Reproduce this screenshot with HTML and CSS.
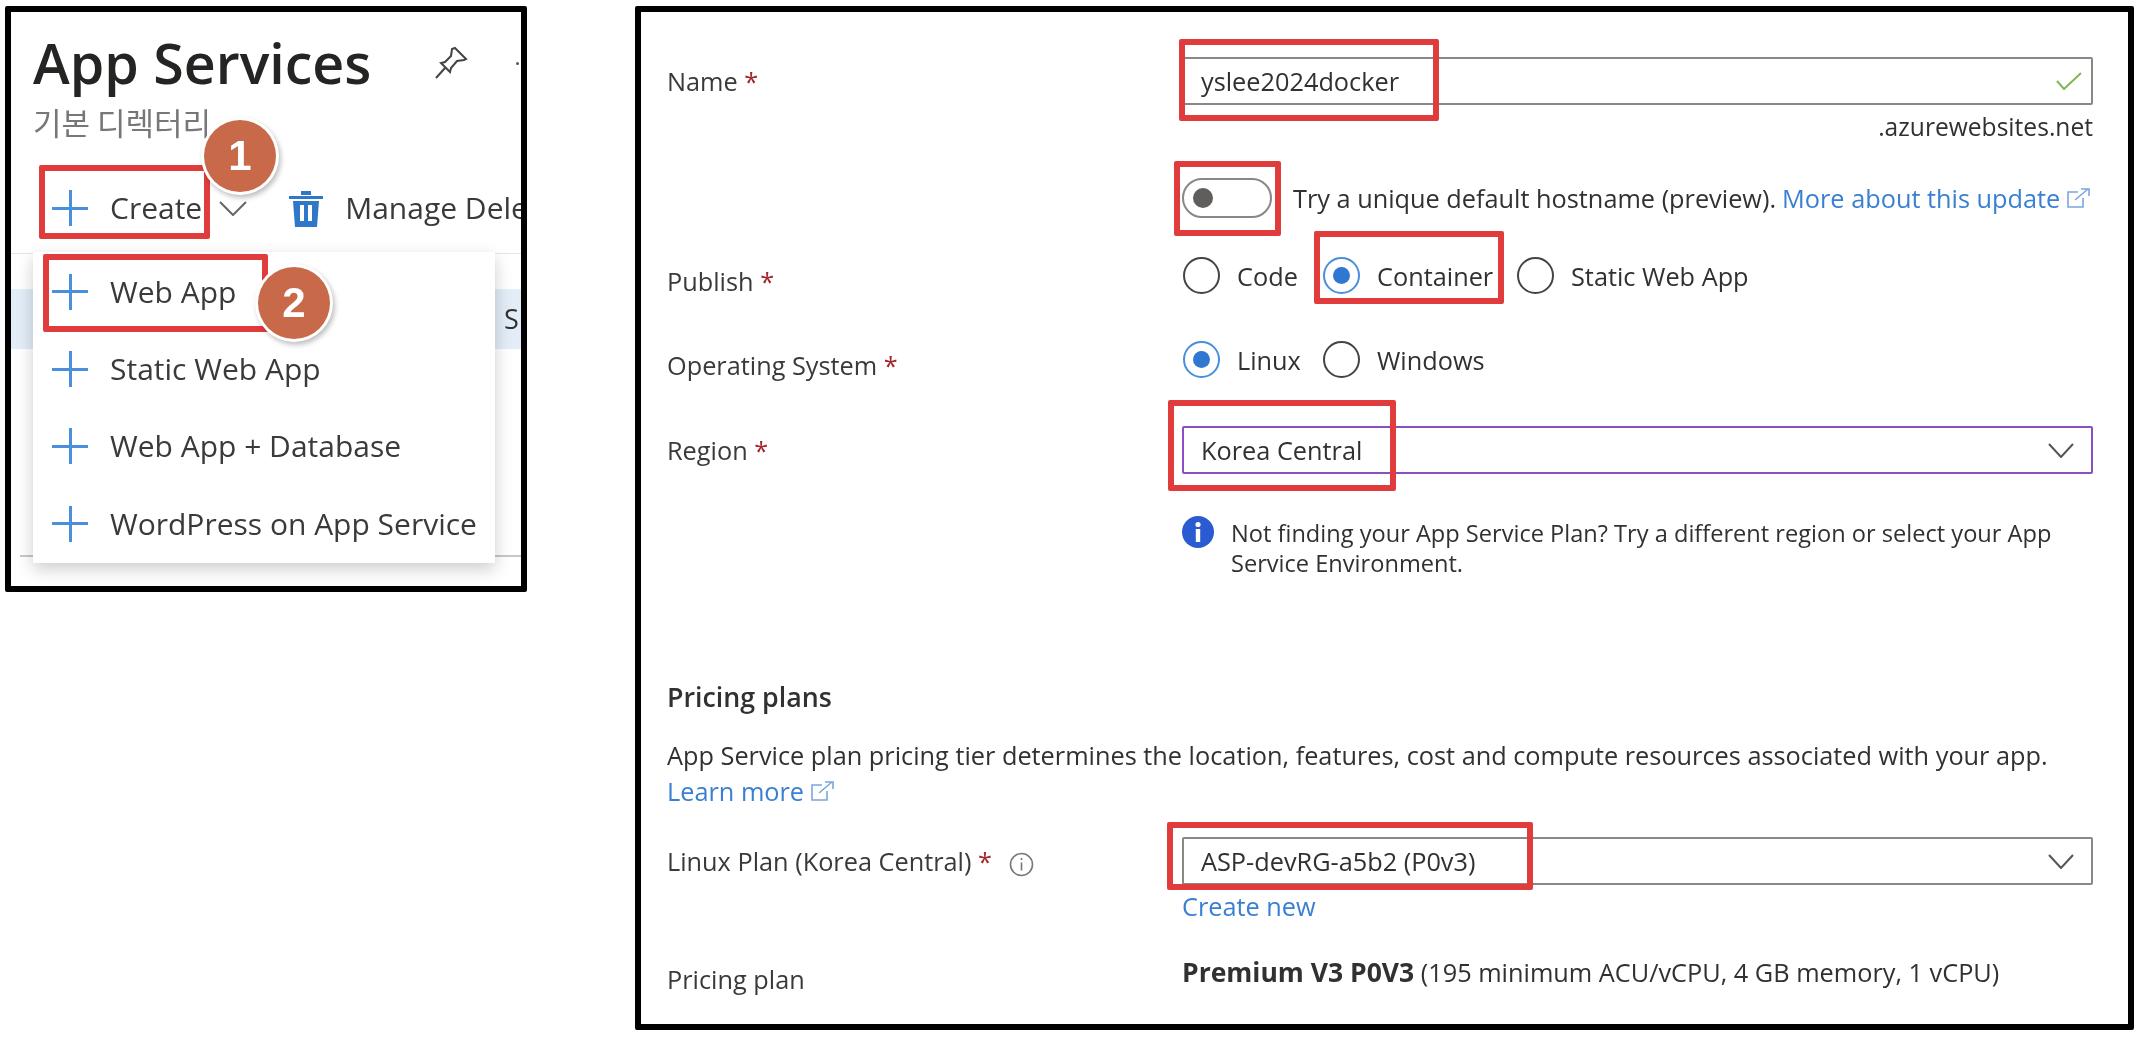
FILE: index.html
```html
<!DOCTYPE html>
<html lang="en">
<head>
    <meta charset="UTF-8">
    <meta name="viewport" content="width=device-width, initial-scale=1.0">
    <title>App Services</title>
    <link rel="stylesheet" href="styles.css">
</head>
<body>
    <div class="panel panel-left">
        <div class="title-row">
            <h1 class="title">App Services</h1>
            <svg class="pin" viewBox="0 0 34 34" fill="none" stroke="#444" stroke-width="2">
                <path d="M21 2l11 11-2 1-7 1-6 7-1 4-9-9 4-1 6-6 1-7z"/>
                <path d="M11 22L2 32"/>
            </svg>
            <span class="more-dot"></span>
        </div>
        <p class="subtitle">기본 디렉터리</p>
        <div class="toolbar">
            <span class="plus"></span>
            <span class="tool-text create-text">Create</span>
            <svg class="tool-chevron" viewBox="0 0 28 15" fill="none" stroke="#666" stroke-width="2"><path d="M1 1l13 13L27 1"/></svg>
            <svg class="trash" viewBox="0 0 34 37">
                <path fill="#2f77c8" d="M0 6h34v3H0zM12 1h10v4H12zM4 11h26l-2 26H6z"/>
                <path fill="#fff" d="M11 15h4v16h-4zM19 15h4v16h-4z"/>
            </svg>
            <span class="tool-text manage-text">Manage Delete</span>
        </div>
        <div class="behind">
            <div class="behind-row">S</div>
        </div>

        <div class="menu">
            <div class="menu-item"><span class="plus"></span><span class="tool-text">Web App</span></div>
            <div class="menu-item"><span class="plus"></span><span class="tool-text">Static Web App</span></div>
            <div class="menu-item"><span class="plus"></span><span class="tool-text">Web App + Database</span></div>
            <div class="menu-item"><span class="plus"></span><span class="tool-text">WordPress on App Service</span></div>
        </div>

        <div class="red-box box-create"></div>
        <div class="red-box box-webapp"></div>
        <div class="badge badge-one">1</div>
        <div class="badge badge-two">2</div>
    </div>

    <div class="panel panel-right">
        <div class="row row-name">
            <div class="label">Name <span class="star">*</span></div>
            <div class="field">
                <div class="input">
                    <span>yslee2024docker</span>
                    <svg class="check" viewBox="0 0 26 18" fill="none" stroke="#7fb84e" stroke-width="2"><path d="M1 9l7 8L25 1"/></svg>
                </div>
                <div class="suffix">.azurewebsites.net</div>
            </div>
        </div>
        <div class="row row-toggle">
            <div class="label"></div>
            <div class="field toggle-line">
                <span class="toggle"><span class="knob"></span></span>
                <span class="toggle-text">Try a unique default hostname (preview).</span>
                <a class="link link-update">More about this update</a>
                <svg class="ext" viewBox="0 0 23 20" fill="none" stroke="#7aa7dc" stroke-width="1.6"><path d="M11 4H1v15h15V10"/><path d="M8 12L21 1M14 1h8v7"/></svg>
            </div>
        </div>
        <div class="row row-publish">
            <div class="label label-low">Publish <span class="star">*</span></div>
            <div class="field radios">
                <span class="radio"></span><span class="radio-text text-code">Code</span>
                <span class="radio checked"></span><span class="radio-text text-container">Container</span>
                <span class="radio"></span><span class="radio-text">Static Web App</span>
            </div>
        </div>
        <div class="row row-os">
            <div class="label label-low">Operating System <span class="star">*</span></div>
            <div class="field radios">
                <span class="radio checked"></span><span class="radio-text text-code">Linux</span>
                <span class="radio"></span><span class="radio-text">Windows</span>
            </div>
        </div>
        <div class="row row-region">
            <div class="label">Region <span class="star">*</span></div>
            <div class="field">
                <div class="input select-purple">
                    <span>Korea Central</span>
                    <svg class="chevron" viewBox="0 0 26 15" fill="none" stroke="#555" stroke-width="2"><path d="M1 1l12 13L25 1"/></svg>
                </div>
            </div>
        </div>
        <div class="row row-note">
            <div class="label"></div>
            <div class="field note">
                <svg class="info" viewBox="0 0 32 32">
                    <circle cx="16" cy="16" r="16" fill="#2a5bd0"/>
                    <circle cx="16" cy="8.5" r="2.6" fill="#fff"/>
                    <rect x="13.8" y="13" width="4.4" height="13" fill="#fff"/>
                </svg>
                <p class="note-text">Not finding your App Service Plan? Try a different region or select your App<br>Service Environment.</p>
            </div>
        </div>

        <h2 class="section">Pricing plans</h2>
        <p class="desc">App Service plan pricing tier determines the location, features, cost and compute resources associated with your app.</p>
        <div class="learn">
            <a class="link">Learn more</a>
            <svg class="ext" viewBox="0 0 23 20" fill="none" stroke="#7aa7dc" stroke-width="1.6"><path d="M11 4H1v15h15V10"/><path d="M8 12L21 1M14 1h8v7"/></svg>
        </div>

        <div class="row row-plan">
            <div class="label">Linux Plan (Korea Central) <span class="star">*</span>
                <svg class="info-small" viewBox="0 0 25 25" fill="none" stroke="#777" stroke-width="1.6">
                    <circle cx="12.500" cy="12.500" r="11"/>
                    <path d="M12.500 10.500v8M12.500 6v2"/>
                </svg>
            </div>
            <div class="field">
                <div class="input">
                    <span>ASP-devRG-a5b2 (P0v3)</span>
                    <svg class="chevron" viewBox="0 0 26 15" fill="none" stroke="#555" stroke-width="2"><path d="M1 1l12 13L25 1"/></svg>
                </div>
                <a class="link create-new">Create new</a>
            </div>
        </div>
        <div class="row row-pricing">
            <div class="label label-low">Pricing plan</div>
            <div class="field"><b class="plan-name">Premium V3 P0V3</b> (195 minimum ACU/vCPU, 4 GB memory, 1 vCPU)</div>
        </div>

        <div class="red-box box-name"></div>
        <div class="red-box box-toggle"></div>
        <div class="red-box box-container"></div>
        <div class="red-box box-region"></div>
        <div class="red-box box-plan"></div>
    </div>
</body>
</html>
```
FILE: styles.css
```css
* {
    box-sizing: border-box;
}
body {
    margin: 0;
    padding: 6px 0 0 5px;
    display: flex;
    align-items: flex-start;
    gap: 108px;
    background-color: #fff;
    color: #323130;
    font-family: "Open Sans", "Noto Sans", sans-serif;
}
p, h1, h2 {
    margin: 0;
}
.panel {
    position: relative;
    background-color: #fff;
    border: 6px solid #000;
    border-radius: 2px;
    overflow: hidden;
    filter: blur(0.4px);
}

/* left panel */
.panel-left {
    width: 522px;
    height: 586px;
    padding: 21px 0 0 22px;
}
.title-row {
    display: flex;
    align-items: center;
    height: 60px;
}
.title {
    font-size: 55.500px;
    font-weight: 600;
    line-height: 60px;
    width: 401px;
    flex: none;
    color: #252423;
    white-space: nowrap;
}
.pin {
    width: 34px;
    height: 34px;
    flex: none;
}
.more-dot {
    width: 3px;
    height: 3px;
    margin-left: 48px;
    flex: none;
    border-radius: 50%;
    background-color: #555;
}
.subtitle {
    font-family: "Noto Sans CJK KR", sans-serif;
    font-size: 31px;
    line-height: 36px;
    margin-top: 11px;
    color: #777;
}
.toolbar {
    display: flex;
    align-items: center;
    height: 44px;
    margin-top: 46px;
    padding-left: 19px;
}
.plus {
    display: block;
    width: 36px;
    height: 36px;
    flex: none;
    background:
        linear-gradient(#4a8fdc, #4a8fdc) center / 3px 100% no-repeat,
        linear-gradient(#4a8fdc, #4a8fdc) center / 100% 3px no-repeat;
}
.tool-text {
    font-size: 30px;
    line-height: 36px;
    white-space: nowrap;
    color: #3b3a39;
}
.create-text {
    margin-left: 22px;
}
.tool-chevron {
    width: 28px;
    height: 15px;
    margin-left: 17px;
    flex: none;
}
.trash {
    width: 34px;
    height: 37px;
    margin-left: 42px;
    flex: none;
}
.manage-text {
    margin-left: 22px;
}
.behind {
    position: absolute;
    left: 0;
    right: 0;
    top: 241px;
    height: 304px;
}
.behind::before {
    content: "";
    position: absolute;
    left: 0;
    right: 0;
    top: 0;
    border-top: 1px solid #e6e6e6;
}
.behind::after {
    content: "";
    position: absolute;
    left: 9px;
    right: 0;
    bottom: 0;
    border-top: 2px solid #c8c8c8;
}
.behind-row {
    margin-top: 36px;
    height: 60px;
    background-color: #e3edf7;
    padding-left: 493px;
    font-size: 27px;
    line-height: 60px;
    overflow: hidden;
}
.menu {
    position: absolute;
    left: 22px;
    top: 240px;
    width: 462px;
    height: 311px;
    padding-top: 1px;
    background-color: #fff;
    box-shadow: 0 6px 16px rgba(0, 0, 0, 0.2);
}
.menu-item {
    display: flex;
    align-items: center;
    gap: 22px;
    height: 77.400px;
    padding-left: 19px;
}

/* right panel */
.panel-right {
    width: 1499px;
    height: 1024px;
    padding: 45px 35px 0 26px;
    font-size: 25.300px;
    line-height: 30px;
}
.row {
    display: grid;
    grid-template-columns: 515px 1fr;
}
.label {
    line-height: 48px;
    color: #3b3a39;
}
.label-low {
    line-height: 36px;
    padding-top: 6px;
}
.star {
    color: #a4262c;
}
.input {
    display: flex;
    align-items: center;
    justify-content: space-between;
    height: 48px;
    padding: 0 17px;
    border: 2px solid #8a8886;
    border-radius: 2px;
}
.select-purple {
    border-color: #8a4fc0;
}
.check {
    width: 26px;
    height: 18px;
    margin-right: -8px;
}
.chevron {
    width: 26px;
    height: 15px;
}
.suffix {
    font-size: 24.600px;
    text-align: right;
    line-height: 34px;
    margin-top: 5px;
}
.row-toggle {
    margin-top: 34px;
}
.toggle-line {
    display: flex;
    align-items: center;
    height: 40px;
}
.toggle {
    display: flex;
    align-items: center;
    width: 90px;
    height: 40px;
    padding-left: 9px;
    border: 2px solid #8a8886;
    border-radius: 20px;
    flex: none;
}
.knob {
    width: 20px;
    height: 20px;
    border-radius: 50%;
    background-color: #605e5c;
}
.toggle-text {
    margin-left: 21px;
    white-space: nowrap;
}
.link {
    color: #3a80d2;
}
.link-update {
    margin-left: 6px;
    white-space: nowrap;
}
.ext {
    width: 23px;
    height: 20px;
    margin-left: 7px;
    flex: none;
}
.row-publish {
    margin-top: 39px;
}
.radios {
    display: flex;
    align-items: center;
    height: 37px;
    padding-left: 1px;
}
.radio {
    position: relative;
    width: 37px;
    height: 37px;
    flex: none;
    border: 2px solid #444;
    border-radius: 50%;
}
.radio.checked {
    border-color: #4a8fdc;
}
.radio.checked::after {
    content: "";
    position: absolute;
    left: 8px;
    top: 8px;
    width: 17px;
    height: 17px;
    border-radius: 50%;
    background-color: #2f77d0;
}
.radio-text {
    margin-left: 17px;
    white-space: nowrap;
}
.text-code {
    width: 86px;
    flex: none;
}
.text-container {
    width: 140px;
    flex: none;
}
.row-os {
    margin-top: 42px;
}
.row-region {
    margin-top: 43px;
}
.row-note {
    margin-top: 42px;
}
.note {
    display: flex;
    gap: 17px;
}
.info {
    width: 32px;
    height: 32px;
    flex: none;
}
.note-text {
    font-size: 23.600px;
    line-height: 30px;
    margin-top: 2px;
    white-space: nowrap;
}
.section {
    font-size: 26.800px;
    font-weight: 600;
    line-height: 30px;
    margin-top: 104px;
}
.desc {
    margin-top: 28px;
    white-space: nowrap;
}
.learn {
    display: flex;
    align-items: center;
    height: 30px;
    margin-top: 6px;
}
.row-plan {
    margin-top: 31px;
}
.info-small {
    width: 25px;
    height: 25px;
    margin-left: 10px;
    vertical-align: -6px;
}
.create-new {
    display: block;
    margin-top: 6px;
}
.row-pricing {
    margin-top: 36px;
}
.row-pricing .label-low {
    padding-top: 4px;
}
.plan-name {
    font-size: 26.500px;
}

/* red annotation boxes, offsets are from the panel's inner corner */
.red-box {
    position: absolute;
    border: 6px solid #e03c3c;
    border-radius: 2px;
}
.box-create {
    left: 28px;
    top: 153px;
    width: 171px;
    height: 74px;
}
.box-webapp {
    left: 32px;
    top: 242px;
    width: 225px;
    height: 78px;
}
.box-name {
    left: 538px;
    top: 27px;
    width: 260px;
    height: 82px;
}
.box-toggle {
    left: 533px;
    top: 149px;
    width: 107px;
    height: 75px;
}
.box-container {
    left: 673px;
    top: 219px;
    width: 190px;
    height: 73px;
}
.box-region {
    left: 527px;
    top: 388px;
    width: 228px;
    height: 91px;
}
.box-plan {
    left: 526px;
    top: 810px;
    width: 366px;
    height: 68px;
}

/* number badges */
.badge {
    position: absolute;
    width: 72px;
    height: 72px;
    border-radius: 50%;
    background-color: #c8694a;
    color: #fff;
    font-family: "Liberation Sans", sans-serif;
    font-size: 42px;
    font-weight: 700;
    line-height: 72px;
    text-align: center;
    box-shadow: 0 0 0 3px #fff, 2px 3px 5px 3px rgba(0, 0, 0, 0.25);
}
.badge-one {
    left: 193px;
    top: 108px;
}
.badge-two {
    left: 247px;
    top: 255px;
}
```
